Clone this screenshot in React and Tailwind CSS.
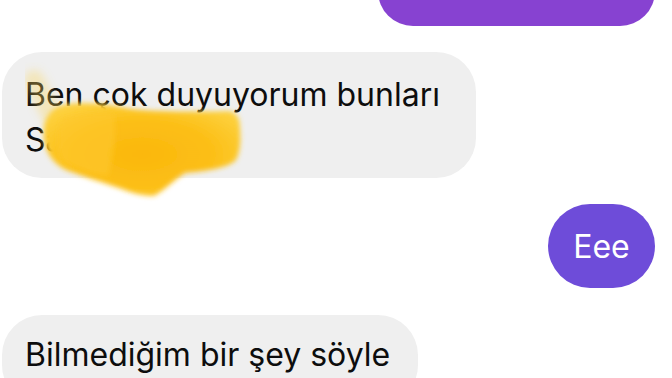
import React from "react";

const Scribble = () => (
  <svg
    className="absolute left-0 top-0 pointer-events-none"
    width="300"
    height="180"
    viewBox="0 0 300 180"
  >
    <defs>
      <filter id="soft" x="-20%" y="-20%" width="140%" height="140%">
        <feGaussianBlur stdDeviation="2.5" />
      </filter>
      <filter id="softer" x="-50%" y="-50%" width="200%" height="200%">
        <feGaussianBlur stdDeviation="4" />
      </filter>
      <radialGradient id="ink" cx="0.5" cy="0.55" r="0.6">
        <stop offset="0" stopColor="#fbb70c" />
        <stop offset="0.6" stopColor="#fcbf17" />
        <stop offset="1" stopColor="#fdd03c" />
      </radialGradient>
    </defs>
    {/* faint stroke over the B */}
    <path
      d="M32 28 C 38 40, 44 52, 50 64"
      stroke="#f8d45a"
      strokeOpacity="0.35"
      strokeWidth="20"
      strokeLinecap="round"
      fill="none"
      filter="url(#softer)"
    />
    <path
      d="M46 64 C 52 54, 62 51, 80 51 C 100 51, 114 54, 130 57 C 160 60, 200 60, 226 59 C 235 60, 238 66, 238 76 C 239 90, 238 100, 234 108 C 226 116, 205 119, 183 121 C 172 128, 164 137, 152 144 C 140 144, 130 141, 120 137 C 100 130, 80 124, 64 118 C 52 112, 44 102, 42 88 C 41 76, 42 70, 46 64 Z"
      fill="url(#ink)"
      filter="url(#soft)"
    />
    <path
      d="M60 66 C 80 62, 100 60, 112 62 C 114 82, 112 102, 106 124 C 90 122, 72 116, 60 108 C 54 94, 55 78, 60 66 Z"
      fill="#fdc82e"
      fillOpacity="0.6"
      filter="url(#soft)"
    />
  </svg>
);

export default function App() {
  return (
    <div
      className="w-[672px] h-[378px] overflow-hidden bg-white flex flex-col pl-[2px] pr-[17px] text-[32px] leading-[45px] text-[#0d0d0d]"
      style={{ fontFamily: "Inter, 'Liberation Sans', sans-serif" }}
    >
      <div className="self-end w-[277px] h-[70px] -mt-[44px] rounded-[36px] bg-[#8742d1] shrink-0" />

      <div className="relative mt-[26px] w-[474px] h-[126px] rounded-[40px] bg-[#efefef] pl-[23px] pt-[20px] shrink-0">
        <p>Ben çok duyuyorum bunları</p>
        <p>Sa</p>
        <Scribble />
      </div>

      <div className="self-end mt-[26px] w-[107px] h-[84px] rounded-full bg-[#6e4cd9] text-white flex items-center justify-center shrink-0">
        Eee
      </div>

      <div className="mt-[27px] w-[416px] h-[90px] rounded-[40px] bg-[#efefef] pl-[23px] pt-[17px] shrink-0">
        <p>Bilmediğim bir şey söyle</p>
      </div>
    </div>
  );
}
